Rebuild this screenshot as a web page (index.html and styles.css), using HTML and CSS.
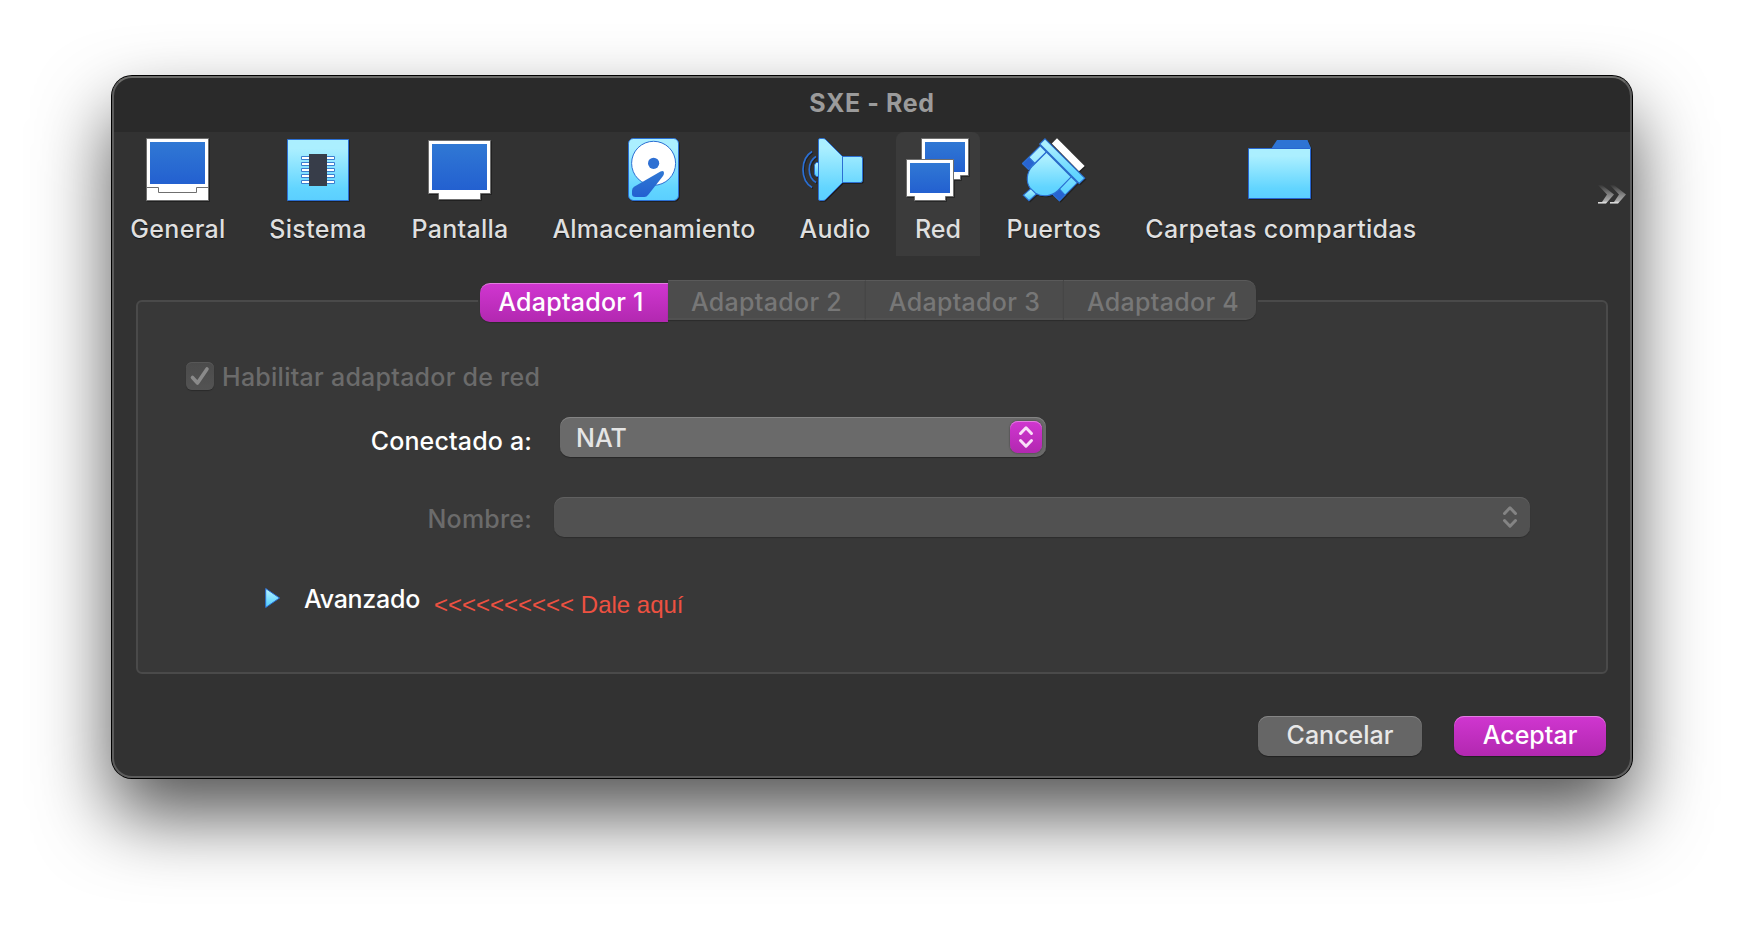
FILE: index.html
```html
<!DOCTYPE html>
<html lang="es">
<head>
<meta charset="utf-8">
<title>SXE - Red</title>
<link rel="stylesheet" href="styles.css">
</head>
<body>
<svg class="defs" width="0" height="0" aria-hidden="true">
  <defs>
    <linearGradient id="cyan" x1="0" y1="0" x2="0" y2="1"><stop offset=".15" stop-color="#abefff"/><stop offset=".8" stop-color="#62d5ff"/><stop offset="1" stop-color="#5bcfff"/></linearGradient>
    <linearGradient id="blue" x1="0" y1="0" x2="0" y2="1"><stop offset="0" stop-color="#3078d4"/><stop offset="1" stop-color="#2360d0"/></linearGradient>
    <linearGradient id="fade" x1="0" y1="0" x2="0" y2="1"><stop offset="0" stop-color="#363636"/><stop offset=".5" stop-color="#808080"/><stop offset=".85" stop-color="#a8a8a8"/><stop offset="1" stop-color="#f4f4f4"/></linearGradient>
  </defs>
</svg>
<main class="window">
  <header class="titlebar"><span class="t-title">SXE - Red</span></header>
  <nav class="toolbar">
    <div class="item w-general">
      <svg class="icon" width="64" height="64" viewBox="0 0 64 64"><path d="M.5.5h62v62H.5z" fill="#fff" stroke="#6f6f6f"/><path d="M4 4h55v42H4z" fill="url(#blue)"/><path d="M0 49.500h12.500v5h38v-5H63" fill="none" stroke="#6f6f6f"/></svg>
      <span class="t-general">General</span>
    </div>
    <div class="item w-sistema">
      <svg class="icon" width="64" height="64" viewBox="0 0 64 64"><path d="M1.500 1.500h61v61h-61z" fill="url(#cyan)" stroke="#2b6fd3"/><g fill="#fff" stroke="#3a7fd0"><path d="M15.500 18.500h33v3h-33zM15.500 24.500h33v3h-33zM15.500 30.500h33v3h-33zM15.500 36.500h33v3h-33zM15.500 42.500h33v3h-33z"/></g><path d="M23 16h18v32H23z" fill="#373d49"/></svg>
      <span class="t-sistema">Sistema</span>
    </div>
    <div class="item w-pantalla">
      <svg class="icon" width="64" height="64" viewBox="0 0 64 64"><path d="M.5 2.500h62v53h-10v6h-42v-6H.5z" fill="#fff" stroke="#6f6f6f"/><path d="M4 6h55v46H4z" fill="url(#blue)"/></svg>
      <span class="t-pantalla">Pantalla</span>
    </div>
    <div class="item w-almacen">
      <svg class="icon" width="64" height="64" viewBox="0 0 64 64"><rect x="6.500" y=".5" width="50" height="62" rx="5" fill="url(#cyan)" stroke="#2b6fd3"/><circle cx="31.600" cy="25.300" r="22" fill="#fff" stroke="#2b6fd3"/><circle cx="31.600" cy="25.300" r="5.600" fill="#2e70d3"/><path d="M10 52.500q0-2.500 2.500-4L38.500 33.500q3.500-1.500 3.500 1.500 0 1.500-1 3L26.500 56.500q-2 2.500-4 2.500h-9q-3.500 0-3.500-3z" fill="url(#blue)"/></svg>
      <span class="t-almacen">Almacenamiento</span>
    </div>
    <div class="item w-audio">
      <svg class="icon" width="64" height="64" viewBox="0 0 64 64"><g stroke="#2b6fd3"><path d="M16.500 24.500h-2q-2 1-2 3v8q0 2 2 3h2z" fill="url(#cyan)"/><path d="M16.500 2q0-1.500 1.500-1.500h3q1.500 0 2.500 1L40.500 18.500h18q2 0 2 2v22q0 2-2 2h-18L23.500 61.500q-1 1-2.500 1h-3q-1.500 0-1.500-1.500z" fill="url(#cyan)"/><path d="M40.500 18v27" fill="none"/><g fill="none" stroke-width="1.700"><path d="M10 13.500C-2 21-2 42 10 49.500M14 18.500C5 24 5 39 14 44.500"/></g></g></svg>
      <span class="t-audio">Audio</span>
    </div>
    <div class="item w-red selected">
      <svg class="icon" width="64" height="64" viewBox="0 0 64 64"><path d="M15.500.5h47v37h-8v4h-31v-4h-8z" fill="#fff" stroke="#6f6f6f"/><path d="M19 4h40v30H19z" fill="url(#blue)"/><path d="M.5 21.500h47v37h-8v4h-31v-4h-8z" fill="#fff" stroke="#6f6f6f"/><path d="M4 25h40v30H4z" fill="url(#blue)"/></svg>
      <span class="t-red">Red</span>
    </div>
    <div class="item w-puertos">
      <svg class="icon" width="64" height="64" viewBox="0 0 64 64"><path d="M35 .3 62.700 28 57 33.200 29.800 5.500z" fill="#fff"/><g stroke="#2b6fd3" stroke-width="1.100"><path d="M18.300 7.800 24.500 14 6.500 31.500.6 25.500zM49 38.500 55.300 44.800 37.500 62.700 31 56.500z" fill="url(#cyan)"/><path d="M7 19.500 12.500 25 6.500 31.200.6 25.500zM37 50.500 43 57 37.500 62.700 31 56.500z" fill="#2864d1"/><path d="M9.500 50 14.500 56 7 62.700 1.300 57.200z" fill="url(#cyan)"/><path d="M24.500 14 10.500 28C4 35 4 44 8 50l5.500 5.200C20 59 29 59 36 52.500L49.200 38.800z" fill="url(#cyan)"/><path d="M23 .8 62.800 40.200 57.200 45.500 17.700 6z" fill="url(#cyan)"/></g></svg>
      <span class="t-puertos">Puertos</span>
    </div>
    <div class="item w-carpetas">
      <svg class="icon" width="64" height="64" viewBox="0 0 64 64"><path d="M23 11 29 2h30.500L63 10v2H23z" fill="#2e74d4"/><path d="M.5 10.500h62v50H.5z" fill="url(#cyan)" stroke="#2866d2"/></svg>
      <span class="t-carpetas">Carpetas compartidas</span>
    </div>
    <svg class="more" width="30" height="20" viewBox="0 0 30 20"><path d="M0 1h4l12 9.500L8 19.500H0v-1.500h4l5-7.500zM12 1h4l12 9.500L20 19.500h-8v-1.500h4l5-7.500z" fill="url(#fade)"/></svg>
  </nav>
  <div class="tabs">
    <div class="tab active"><span class="t-tab1">Adaptador 1</span></div>
    <div class="tab second"><span class="t-tab">Adaptador 2</span></div>
    <div class="tab third"><span class="t-tab">Adaptador 3</span></div>
    <div class="tab fourth"><span class="t-tab">Adaptador 4</span></div>
  </div>
  <section class="panel">
    <div class="row enable">
      <span class="checkbox"><svg width="28" height="28" viewBox="0 0 28 28"><path d="M6.500 15.500 11.500 21 21 7" fill="none" stroke="#8a8a8a" stroke-width="3.600" stroke-linecap="round" stroke-linejoin="round"/></svg></span>
      <span class="t-habilitar">Habilitar adaptador de red</span>
    </div>
    <div class="row connected">
      <label class="label"><span class="t-conectado">Conectado a:</span></label>
      <div class="select">
        <span class="t-nat">NAT</span>
        <span class="stepper"><svg width="32" height="32" viewBox="0 0 32 32"><path d="M10.500 12.500 16 6.800 21.500 12.500M10.500 19.500 16 25.200 21.500 19.500" fill="none" stroke="#f9dff8" stroke-width="3" stroke-linecap="round" stroke-linejoin="round"/></svg></span>
      </div>
    </div>
    <div class="row name">
      <label class="label"><span class="t-nombre">Nombre:</span></label>
      <div class="select disabled">
        <svg width="32" height="32" viewBox="0 0 32 32"><path d="M10.500 12.500 16 6.800 21.500 12.500M10.500 19.500 16 25.200 21.500 19.500" fill="none" stroke="#848484" stroke-width="3" stroke-linecap="round" stroke-linejoin="round"/></svg>
      </div>
    </div>
    <div class="row advanced">
      <svg class="arrow" width="16" height="22" viewBox="0 0 16 22"><path d="M.7 1.500 14.500 11 .7 20.500z" fill="url(#cyan)" stroke="#2b6fd3" stroke-linejoin="round"/></svg>
      <span class="t-avanzado">Avanzado</span>
      <span class="note">&lt;&lt;&lt;&lt;&lt;&lt;&lt;&lt;&lt;&lt; Dale aquí</span>
    </div>
  </section>
  <footer class="actions">
    <button class="btn cancel"><span class="t-cancelar">Cancelar</span></button>
    <button class="btn accept"><span class="t-aceptar">Aceptar</span></button>
  </footer>
</main>
</body>
</html>
```
FILE: styles.css
```css
* { box-sizing: border-box; }
body { margin: 0; padding: 76px 112px; height: 926px; overflow: hidden; background: #fff; font: 450 25px/30px Inter, "Liberation Sans", sans-serif; color: #dfdfdf; }
.defs { position: absolute; }
span { white-space: nowrap; }
.window { position: relative; width: 1520px; height: 702px; border-radius: 20px; background: #323232; box-shadow: 0 0 0 1px #000, 0 37px 74px rgba(0,0,0,.68); display: flex; flex-direction: column; }
.window::after { content: ""; position: absolute; inset: 0; border: 2px solid #5c5c5c; border-top-color: #6c6c6a; border-radius: 20px; pointer-events: none; }
.titlebar { height: 56px; flex: none; padding-top: 12px; background: #2a2a2a; border-radius: 20px 20px 0 0; text-align: center; font-weight: 700; color: #9b9b9b; letter-spacing: .6px; }
.toolbar { display: flex; height: 124px; flex: none; letter-spacing: .3px; }
.item { flex: none; display: flex; flex-direction: column; align-items: center; padding-top: 6px; gap: 12px; text-shadow: 0 1px 1px rgba(0,0,0,.6); }
.icon { display: block; filter: drop-shadow(1px 1px 0 rgba(0,0,0,.35)); }
.w-general { width: 132px; }
.w-sistema { width: 148px; }
.w-pantalla { width: 136px; }
.w-almacen { width: 252px; letter-spacing: .2px; }
.w-audio { width: 108px; }
.t-audio { margin-left: 2px; }
.w-red { width: 84px; margin-left: 8px; letter-spacing: 0; }
.w-puertos { width: 148px; }
.w-carpetas { width: 304px; }
.t-carpetas { margin-left: 2px; }
.selected { background: #3b3b3b; border-radius: 8px 8px 0 0; text-shadow: none; }
.more { margin: 52px 4px 0 auto; }
.tabs { position: relative; z-index: 1; display: flex; width: 780px; height: 42px; flex: none; margin: 24px 0 0 366px; padding: 0 2px; background: linear-gradient(#323232 20px, #383838 20px); letter-spacing: .3px; }
.tab { display: flex; justify-content: center; align-items: center; height: 40px; padding-top: 4px; background: #4c4c4c; border-top: 1px solid #5a5a5a; border-bottom: 2px solid #515151; color: #777; box-shadow: 0 1px 1px rgba(0,0,0,.2); }
.active { width: 188px; height: 39px; margin-top: 3px; padding: 3px 6px 0 0; align-items: flex-start; background: linear-gradient(#d036d0, #b228b0); border: 0; border-top: 1px solid #e27de0; border-radius: 10px 0 0 10px; color: #fff; font-weight: 500; letter-spacing: .25px; }
.second { width: 197px; }
.third { width: 198px; border-left: 1px solid #464646; }
.fourth { width: 193px; padding-left: 6px; border-left: 1px solid #464646; border-radius: 0 10px 10px 0; }
.panel { width: 1472px; height: 374px; flex: none; margin: -22px 0 0 24px; padding-top: 60px; border: 2px solid #4a4a4a; border-radius: 6px; background: #383838; color: #fff; }
.row { display: flex; }
.enable { height: 28px; padding-left: 48px; gap: 8px; color: #6b6b6b; letter-spacing: .26px; }
.checkbox { width: 28px; height: 28px; border-radius: 6px; background: linear-gradient(#4b4b4b, #535353); box-shadow: 0 1px 1px rgba(0,0,0,.25), inset 0 1px 0 #575757; }
.checkbox svg { display: block; }
.connected { height: 40px; margin-top: 27px; }
.label { width: 394px; display: flex; justify-content: flex-end; padding-top: 9px; font-weight: 500; letter-spacing: .16px; }
.select { display: flex; justify-content: space-between; width: 486px; height: 40px; margin-left: 28px; padding: 4px 4px 4px 16px; border-radius: 10px; background: #6a6a6a; box-shadow: inset 0 1px 0 #848484, 0 1px 1px rgba(0,0,0,.3); color: #e5e5e5; line-height: 34px; }
.stepper { width: 32px; height: 32px; border-radius: 8px; background: linear-gradient(#d036d0, #b228b0); box-shadow: inset 0 1px 0 #e27de0, 0 0 2px rgba(0,0,0,.5); }
.stepper svg { display: block; }
.name { height: 40px; margin-top: 40px; color: #6b6b6b; }
.name .label { padding-top: 7px; font-weight: 450; letter-spacing: .2px; }
.disabled { width: 976px; margin-left: 22px; background: #515151; box-shadow: inset 0 1px 0 #606060, 0 1px 1px rgba(0,0,0,.2); justify-content: flex-end; }
.advanced { margin-top: 46px; padding-left: 127px; align-items: flex-start; font-weight: 500; }
.arrow { margin-top: 4px; }
.t-avanzado { margin: 1px 0 0 23px; letter-spacing: -.28px; }
.note { margin: 7px 0 0 14px; font: 24px/30px "Liberation Sans", sans-serif; color: #ee5141; }
.actions { display: flex; justify-content: flex-end; gap: 32px; margin: 42px 26px 0 0; }
.btn { height: 40px; border: 0; border-radius: 10px; padding: 0 0 2px; background: #666; box-shadow: inset 0 1px 0 #858585, 0 1px 1px rgba(0,0,0,.35); font: inherit; color: #e8e8e8; }
.cancel { width: 164px; }
.accept { width: 152px; background: linear-gradient(#d036d0, #b228b0); box-shadow: inset 0 1px 0 #e27de0, 0 1px 1px rgba(0,0,0,.35); color: #fff; font-weight: 500; }
```
